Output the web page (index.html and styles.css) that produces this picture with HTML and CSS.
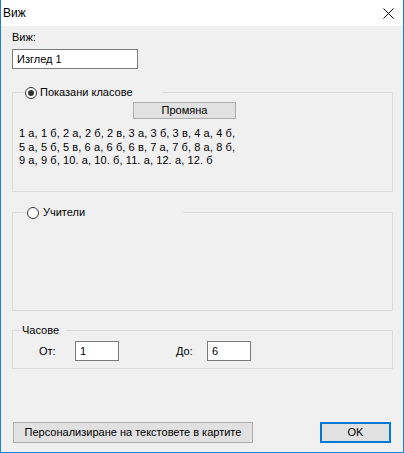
FILE: index.html
```html
<!DOCTYPE html>
<html lang="bg">
<head>
<meta charset="utf-8">
<title>Виж</title>
<link rel="stylesheet" href="styles.css">
</head>
<body>
<div class="window">
  <div class="titlebar">
    <span class="title">Виж</span>
    <svg class="close" width="11" height="11" viewBox="0 0 11 11"><path d="M0.5 0.5 L10.5 10.5 M10.5 0.5 L0.5 10.5" stroke="#000" stroke-width="1" fill="none"/></svg>
  </div>
  <div class="content">
    <div class="label">Виж:</div>
    <div class="textbox name">Изглед 1</div>

    <fieldset class="group group-classes">
      <legend class="legend legend-classes"><span class="radio checked"></span><span>Показани класове</span></legend>
      <div class="btn change">Промяна</div>
      <div class="classlist">1 а, 1 б, 2 а, 2 б, 2 в, 3 а, 3 б, 3 в, 4 а, 4 б,<br>5 а, 5 б, 5 в, 6 а, 6 б, 6 в, 7 а, 7 б, 8 а, 8 б,<br>9 а, 9 б, 10. а, 10. б, 11. а, 12. а, 12. б</div>
    </fieldset>

    <fieldset class="group group-teachers">
      <legend class="legend legend-teachers"><span class="radio"></span><span>Учители</span></legend>
    </fieldset>

    <fieldset class="group group-hours">
      <legend class="legend legend-hours">Часове</legend>
      <div class="hours-row">
        <span class="hlabel from">От:</span>
        <div class="textbox small">1</div>
        <span class="hlabel to">До:</span>
        <div class="textbox small">6</div>
      </div>
    </fieldset>

    <div class="footer">
      <div class="btn custom">Персонализиране на текстовете в картите</div>
      <div class="btn ok">OK</div>
    </div>
  </div>
</div>
</body>
</html>
```

FILE: styles.css
```css
* { box-sizing: border-box; }
html, body { margin: 0; padding: 0; background: #f0f0f0; }
body {
  font-family: "Liberation Sans", Arial, sans-serif;
  font-size: 11px;
  color: #000;
}
.window {
  width: 404px;
  height: 453px;
  border: 1px solid #1883d7;
  border-top: none;
  background: #f0f0f0;
  display: flex;
  flex-direction: column;
}
.titlebar {
  height: 26px;
  background: #fff;
  display: flex;
  align-items: center;
  justify-content: space-between;
  padding-left: 2px;
  flex: none;
}
.title { font-size: 12px; line-height: 14px; }
.close { margin-right: 9px; display: block; }

.content {
  flex: 1;
  display: flex;
  flex-direction: column;
  padding: 0 10px 9px 11px;
}
.label { margin-top: 5px; line-height: 13px; }
.textbox {
  background: #fff;
  border: 1px solid #7a7a7a;
  height: 20px;
  line-height: 18px;
  padding-left: 4px;
}
.name { margin-top: 5px; width: 126px; }

.group {
  margin: 0;
  padding: 0;
  border: 1px solid #dcdcdc;
  min-width: 0;
}
.legend {
  display: flex;
  align-items: center;
  height: 13px;
  line-height: 13px;
  padding: 0;
}
.legend-classes { margin-left: 11px; width: 139px; padding-left: 1px; gap: 3px; }
.legend-teachers { margin-left: 13px; width: 157px; padding-left: 1px; gap: 4px; }
.legend-hours { margin-left: 8px; width: 45px; padding-left: 1px; }

.radio {
  width: 12px;
  height: 12px;
  border: 1px solid #333;
  border-radius: 50%;
  background: #fff;
  flex: none;
  display: flex;
  align-items: center;
  justify-content: center;
}
.radio.checked::after {
  content: "";
  width: 6px;
  height: 6px;
  border-radius: 50%;
  background: #333;
}

.group-classes { margin-top: 17px; height: 106px; }
.group-teachers { margin-top: 14px; height: 105px; }
.group-hours { margin-top: 13px; height: 45px; }

.btn {
  background: #e1e1e1;
  border: 1px solid #adadad;
  text-align: center;
}
.change {
  margin: 3px 0 0 120px;
  width: 103px;
  height: 17px;
  line-height: 15px;
}
.classlist {
  margin: 8px 0 0 6px;
  line-height: 13.5px;
  letter-spacing: 0.1px;
}

.hours-row {
  display: flex;
  align-items: center;
  margin-top: 4px;
}
.hlabel { line-height: 13px; }
.from { margin-left: 26px; width: 36px; }
.to { margin-left: 57px; width: 31px; }
.small { width: 44px; }

.footer {
  margin-top: auto;
  display: flex;
  justify-content: space-between;
  padding: 0 2px 0 1px;
}
.custom { width: 240px; height: 21px; line-height: 19px; }
.ok {
  width: 71px;
  height: 21px;
  line-height: 17px;
  border: 2px solid #0078d7;
}
```
